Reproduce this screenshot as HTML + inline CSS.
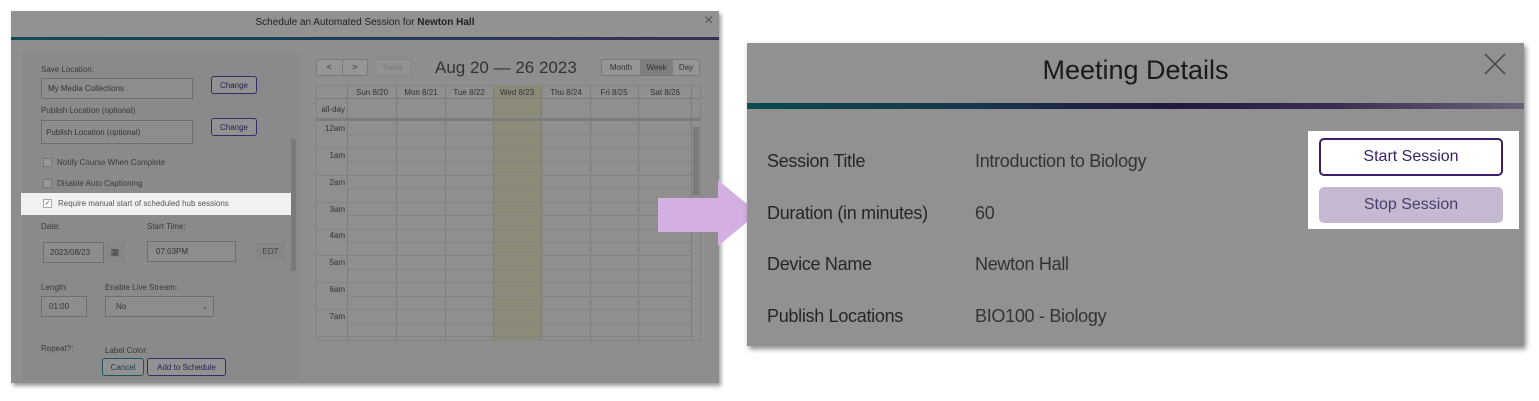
<!DOCTYPE html>
<html><head><style>
*{box-sizing:border-box;margin:0;padding:0}
body{width:1539px;height:401px;background:#fff;position:relative;overflow:hidden;font-family:"Liberation Sans",sans-serif}
.a{position:absolute}
.lbl{font-size:8px;color:#3a3a3a}
.inp{position:absolute;border:1px solid #6e6e6e;background:#8d8d8d;font-size:8px;color:#333;padding-left:6px;display:flex;align-items:center}
.btn{position:absolute;border:1.5px solid #3a2a6a;border-radius:3px;font-size:8px;color:#2a2050;display:flex;align-items:center;justify-content:center;background:#929292}
.cb{position:absolute;width:9px;height:9px;border:1px solid #777;background:#999}
.rl{font-size:18px;color:#262626;position:absolute;left:767px;letter-spacing:-0.3px}
.rv{font-size:18px;color:#333;position:absolute;left:975px;letter-spacing:-0.3px}
</style></head><body>
<!-- left panel -->
<div class="a" style="left:11px;top:11px;width:708px;height:372px;background:#8e8e8e;box-shadow:2px 3px 4px rgba(0,0,0,.4)"></div>
<div class="a" style="left:11px;top:11px;width:708px;height:26px;background:#929292;font-size:10px;color:#222;text-align:center;line-height:24px">Schedule an Automated Session for <b>Newton Hall</b></div>
<div class="a" style="left:704px;top:12px;font-size:16px;color:#555">×</div>
<div class="a" style="left:11px;top:37px;width:708px;height:3px;background:linear-gradient(90deg,#0e4b55,#1e3a55,#3a2e55)"></div>
<div class="a" style="left:22px;top:52px;width:278px;height:328px;background:#8a8a8a"></div>
<div class="a" style="left:291px;top:139px;width:5px;height:132px;background:#7a7a7a"></div>
<div class="a lbl" style="left:41px;top:65px">Save Location:</div>
<div class="inp" style="left:41px;top:78px;width:152px;height:21px">My Media Collections</div>
<div class="btn" style="left:211px;top:76px;width:46px;height:18px">Change</div>
<div class="a lbl" style="left:41px;top:106px">Publish Location (optional)</div>
<div class="inp" style="left:41px;top:120px;width:152px;height:24px;padding-left:4px">Publish Location (optional)</div>
<div class="btn" style="left:211px;top:118px;width:46px;height:18px">Change</div>
<div class="cb" style="left:43px;top:158px"></div><div class="a lbl" style="left:57px;top:158px">Notify Course When Complete</div>
<div class="cb" style="left:43px;top:179px"></div><div class="a lbl" style="left:57px;top:179px">Disable Auto Captioning</div>
<div class="a" style="left:21px;top:193px;width:270px;height:22px;background:#f1f1f1"></div>
<div class="cb" style="left:43px;top:199px;background:#fff;border-color:#aaa;font-size:7px;line-height:7px;text-align:center;color:#555">✓</div>
<div class="a lbl" style="left:58px;top:199px;color:#555">Require manual start of scheduled hub sessions</div>
<div class="a lbl" style="left:41px;top:222px">Date:</div>
<div class="a lbl" style="left:147px;top:222px">Start Time:</div>
<div class="inp" style="left:43px;top:242px;width:61px;height:21px">2023/08/23</div>
<div class="a" style="left:105px;top:242px;width:20px;height:20px;background:#878787;font-size:9px;color:#444;text-align:center;line-height:20px">▦</div>
<div class="inp" style="left:147px;top:241px;width:89px;height:21px;padding-left:8px">07:03PM</div>
<div class="a" style="left:256px;top:243px;width:29px;height:17px;background:#868686;font-size:8px;color:#444;text-align:center;line-height:17px">EDT</div>
<div class="a lbl" style="left:41px;top:283px">Length:</div>
<div class="a lbl" style="left:105px;top:283px">Enable Live Stream:</div>
<div class="inp" style="left:41px;top:296px;width:46px;height:21px;padding-left:7px">01:00</div>
<div class="inp" style="left:105px;top:296px;width:109px;height:21px;padding-left:10px">No<span style="margin-left:auto;margin-right:5px;font-size:7px">⌄</span></div>
<div class="a lbl" style="left:41px;top:344px">Repeat?:</div>
<div class="a lbl" style="left:105px;top:346px">Label Color:</div>
<div class="btn" style="left:102px;top:358px;width:42px;height:18px;border-color:#1c5560;color:#1c4050">Cancel</div>
<div class="btn" style="left:147px;top:358px;width:79px;height:18px">Add to Schedule</div>
<!-- calendar -->
<div class="a" style="left:316px;top:59px;width:52px;height:17px;border:1px solid #7a7a7a;border-radius:2px;background:#959595;font-size:9px;color:#333;display:flex"><span style="flex:1;text-align:center;line-height:15px;border-right:1px solid #7a7a7a">&lt;</span><span style="flex:1;text-align:center;line-height:15px">&gt;</span></div>
<div class="a" style="left:374px;top:59px;width:37px;height:17px;border:1px solid #888;border-radius:2px;background:#929292;font-size:8px;color:#777;text-align:center;line-height:15px">Today</div>
<div class="a" style="left:435px;top:58px;font-size:17px;color:#333">Aug 20 — 26 2023</div>
<div class="a" style="left:601px;top:59px;width:99px;height:17px;border:1px solid #7a7a7a;border-radius:2px;background:#959595;font-size:8px;color:#333;display:flex;line-height:15px"><span style="width:38px;text-align:center">Month</span><span style="width:33px;text-align:center;background:#7e7e7e">Week</span><span style="flex:1;text-align:center">Day</span></div>
<svg class="a" style="left:316px;top:85px" width="385" height="256">
<rect x="0" y="0" width="385" height="256" fill="#8f8f8f" stroke="#7a7a7a"/>
<rect x="177" y="0" width="48" height="256" fill="#8c8a78"/>
<g stroke="#7d7d7d" stroke-width="1">
<line x1="0" y1="13.5" x2="385" y2="13.5"/><line x1="0" y1="33.5" x2="385" y2="33.5"/><line x1="0" y1="35" x2="385" y2="35" stroke-width="2"/>
<line x1="31.5" y1="0" x2="31.5" y2="256"/><line x1="80.5" y1="0" x2="80.5" y2="256"/><line x1="129.5" y1="0" x2="129.5" y2="256"/><line x1="177.5" y1="0" x2="177.5" y2="256"/><line x1="225.5" y1="0" x2="225.5" y2="256"/><line x1="274.5" y1="0" x2="274.5" y2="256"/><line x1="322.5" y1="0" x2="322.5" y2="256"/><line x1="375.5" y1="0" x2="375.5" y2="256"/>
</g>
<g stroke="#848484"><line x1="31" y1="49.5" x2="375" y2="49.5"/><line x1="0" y1="63.5" x2="375" y2="63.5"/><line x1="31" y1="76.5" x2="375" y2="76.5"/><line x1="0" y1="90.5" x2="375" y2="90.5"/><line x1="31" y1="103.5" x2="375" y2="103.5"/><line x1="0" y1="117.5" x2="375" y2="117.5"/><line x1="31" y1="130.5" x2="375" y2="130.5"/><line x1="0" y1="144.5" x2="375" y2="144.5"/><line x1="31" y1="157.5" x2="375" y2="157.5"/><line x1="0" y1="170.5" x2="375" y2="170.5"/><line x1="31" y1="184.5" x2="375" y2="184.5"/><line x1="0" y1="197.5" x2="375" y2="197.5"/><line x1="31" y1="211.5" x2="375" y2="211.5"/><line x1="0" y1="224.5" x2="375" y2="224.5"/><line x1="31" y1="238.5" x2="375" y2="238.5"/><line x1="0" y1="251.5" x2="375" y2="251.5"/></g>
<rect x="377" y="42" width="6" height="68" fill="#7a7a7a"/>
<g font-size="8" fill="#333" font-family="Liberation Sans" text-anchor="middle">
<text x="56" y="10">Sun 8/20</text><text x="105" y="10">Mon 8/21</text><text x="153" y="10">Tue 8/22</text><text x="201" y="10">Wed 8/23</text><text x="250" y="10">Thu 8/24</text><text x="298" y="10">Fri 8/25</text><text x="349" y="10">Sat 8/26</text>
</g>
<g font-size="8" fill="#333" font-family="Liberation Sans" text-anchor="end">
<text x="29" y="27">all-day</text><text x="29" y="46">12am</text><text x="29" y="73">1am</text><text x="29" y="100">2am</text><text x="29" y="127">3am</text><text x="29" y="153">4am</text><text x="29" y="180">5am</text><text x="29" y="207">6am</text><text x="29" y="234">7am</text>
</g>
</svg>
<!-- arrow -->
<svg class="a" style="left:655px;top:178px" width="110" height="72"><polygon points="3,20 63,20 63,2 103,35 63,68 63,54 3,54" fill="#d4afe1"/></svg>
<!-- right panel -->
<div class="a" style="left:747px;top:43px;width:777px;height:303px;background:#919191;box-shadow:2px 3px 5px rgba(0,0,0,.45)"></div>
<div class="a" style="left:747px;top:55px;width:777px;text-align:center;font-size:27px;color:#1a1a1a">Meeting Details</div>
<svg class="a" style="left:1483px;top:53px" width="24" height="22"><path d="M2 1L22 21M22 1L2 21" stroke="#444" stroke-width="1.5"/></svg>
<div class="a" style="left:747px;top:103px;width:777px;height:6px;background:linear-gradient(90deg,#0b4a50 0%,#18344a 30%,#24183e 55%,#3a2c50 75%,#6a6078 100%)"></div>
<div class="rl" style="top:151px">Session Title</div><div class="rv" style="top:151px">Introduction to Biology</div>
<div class="rl" style="top:203px">Duration (in minutes)</div><div class="rv" style="top:203px">60</div>
<div class="rl" style="top:254px">Device Name</div><div class="rv" style="top:254px">Newton Hall</div>
<div class="rl" style="top:306px">Publish Locations</div><div class="rv" style="top:306px">BIO100 - Biology</div>
<div class="a" style="left:1308px;top:131px;width:211px;height:98px;background:#fff"></div>
<div class="a" style="left:1319px;top:138px;width:184px;height:38px;border:2px solid #3c1e6c;border-radius:5px;background:#fff;color:#3a1e66;font-size:16px;text-align:center;line-height:34px">Start Session</div>
<div class="a" style="left:1319px;top:187px;width:184px;height:36px;border-radius:5px;background:#c4b9d1;color:#4a3e68;font-size:16px;text-align:center;line-height:36px">Stop Session</div>
</body></html>
